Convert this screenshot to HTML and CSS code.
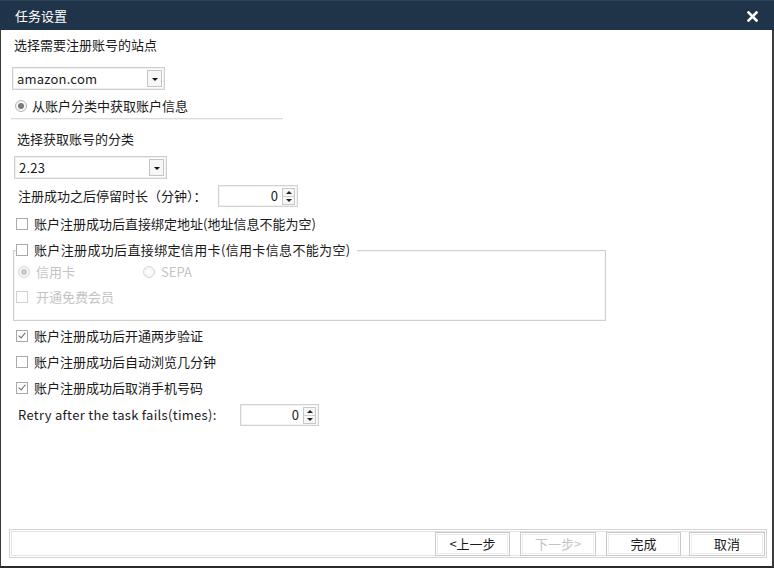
FILE: index.html
```html
<!DOCTYPE html>
<html lang="zh">
<head>
<meta charset="utf-8">
<title>任务设置</title>
<link rel="stylesheet" href="styles.css">
</head>
<body>
<div class="dialog">
  <div class="titlebar">
    <span class="title">任务设置</span>
    <svg class="close" width="11" height="11" viewBox="0 0 11 11"><path d="M1.5 1.5L9.5 9.5M9.5 1.5L1.5 9.5" stroke="#fff" stroke-width="2.6" stroke-linecap="square"/></svg>
  </div>
  <div class="content">
    <div class="label l1">选择需要注册账号的站点</div>
    <div class="select s1"><span class="val">amazon.com</span><span class="drop"><i></i></span></div>
    <div class="row r-radio"><span class="radio on"></span><span>从账户分类中获取账户信息</span></div>
    <div class="sep"></div>
    <div class="label l2">选择获取账号的分类</div>
    <div class="select s2"><span class="val">2.23</span><span class="drop"><i></i></span></div>
    <div class="row r-stay"><span class="lab">注册成功之后停留时长（分钟）：</span>
      <div class="spin sp1"><span class="num">0</span><span class="arrows"><span class="up"></span><span class="dn"></span></span></div>
    </div>
    <div class="row r-addr"><span class="cb"></span><span>账户注册成功后直接绑定地址(地址信息不能为空)</span></div>
    <fieldset class="group">
      <legend><span class="cb"></span><span class="lg">账户注册成功后直接绑定信用卡(信用卡信息不能为空)</span></legend>
      <div class="row dis r-card"><span class="radio on dis-r"></span><span class="t1">信用卡</span><span class="radio dis-r sepa"></span><span>SEPA</span></div>
      <div class="row dis r-free"><span class="cb dis-c"></span><span>开通免费会员</span></div>
    </fieldset>
    <div class="row r-two"><span class="cb on"></span><span>账户注册成功后开通两步验证</span></div>
    <div class="row r-browse"><span class="cb"></span><span>账户注册成功后自动浏览几分钟</span></div>
    <div class="row r-cancel"><span class="cb on"></span><span>账户注册成功后取消手机号码</span></div>
    <div class="row r-retry"><span class="lab">Retry after the task fails(times):</span>
      <div class="spin sp2"><span class="num">0</span><span class="arrows"><span class="up"></span><span class="dn"></span></span></div>
    </div>
  </div>
  <div class="footer">
    <button class="btn">&lt;上一步</button>
    <button class="btn disabled">下一步&gt;</button>
    <button class="btn">完成</button>
    <button class="btn last">取消</button>
  </div>
</div>
</body>
</html>
```

FILE: styles.css
```css
* { box-sizing: border-box; }
html, body { margin: 0; padding: 0; background: #fff; }
body {
  font-family: "Noto Sans CJK SC", "Noto Sans", sans-serif;
  font-size: 13px;
  color: #1a1a1a;
}
.dialog {
  width: 774px;
  height: 568px;
  display: flex;
  flex-direction: column;
  border-left: 1px solid #3a3a3a;
  border-right: 2px solid #3a3a3a;
  border-bottom: 2px solid #2a2a2a;
  background: #fff;
}
.titlebar {
  height: 30px;
  flex: none;
  background: #1f3448;
  border-top: 1px solid #2c4257;
  display: flex;
  align-items: center;
  padding: 0 14px 0 15px;
  margin: 0 -2px 0 -1px;
}
.title { color: #fff; font-size: 13px; flex: 1; }
.close { margin-right: 2px; margin-top: 2px; }

.content {
  flex: 1;
  display: flex;
  flex-direction: column;
  align-items: flex-start;
  padding-left: 11px;
}
.label { height: 16px; line-height: 16px; }
.l1 { margin-top: 7px; margin-left: 2px; }
.l2 { margin-top: 11px; margin-left: 5px; }

.select {
  width: 153px;
  height: 23px;
  border: 1px solid #cfcfcf;
  box-shadow: inset 0 0 0 1px #f0f0f0;
  display: flex;
  align-items: center;
  padding-left: 4px;
}
.select .val { flex: 1; line-height: 16px; letter-spacing: 0.2px; }
.s1 { margin-top: 14px; margin-left: 0; }
.s2 { margin-top: 9px; margin-left: 2px; }
.drop {
  width: 15px;
  height: 17px;
  border: 1px solid #c4c4c4;
  background: #f7f7f7;
  margin-right: 2px;
  display: flex;
  align-items: center;
  justify-content: center;
}
.drop i {
  display: block;
  width: 0; height: 0;
  border-left: 3px solid transparent;
  border-right: 3px solid transparent;
  border-top: 3px solid #111;
  margin-top: 2px;
}

.row { display: flex; align-items: center; height: 16px; line-height: 16px; }
.r-radio { margin-top: 8px; margin-left: 3px; height: 16px; }
.r-radio .radio { margin-right: 5px; }
.sep {
  width: 272px;
  height: 2px;
  margin-left: -1px;
  margin-top: 4px;
  border-top: 1px solid #dcdcdc;
  border-bottom: 1px solid #f3f3f3;
}

.radio {
  width: 12px; height: 12px;
  border-radius: 50%;
  border: 1px solid #b5b5b5;
  background: radial-gradient(circle, #fff 0, #f1f1f1 100%);
  position: relative;
  flex: none;
}
.radio.on::after {
  content: "";
  position: absolute;
  left: 2px; top: 2px;
  width: 6px; height: 6px;
  border-radius: 50%;
  background: #7a7a7a;
}
.cb {
  width: 12px; height: 12px;
  border: 1px solid #a9a9a9;
  background: #fff;
  flex: none;
  margin-right: 6px;
  position: relative;
}
.cb.on::after {
  content: "";
  position: absolute;
  left: 3px; top: 0px;
  width: 3px; height: 6px;
  border-right: 1.5px solid #666;
  border-bottom: 1.5px solid #666;
  transform: rotate(40deg);
}

.r-stay { margin-top: 6px; height: 22px; margin-left: 6px; }
.r-stay .lab { width: 200px; }
.spin {
  height: 22px;
  border: 1px solid #d2d2d2;
  box-shadow: inset 0 0 0 1px #f2f2f2;
  display: flex;
  align-items: center;
  justify-content: flex-end;
  padding-right: 2px;
}
.sp1 { width: 80px; }
.sp2 { width: 79px; }
.num { margin-right: 4px; }
.arrows {
  width: 13px; height: 17px;
  display: flex; flex-direction: column;
  border: 1px solid #c8c8c8;
  background: #f7f7f7;
}
.arrows span { flex: 1; display: flex; align-items: center; justify-content: center; }
.arrows .up { border-bottom: 1px solid #d0d0d0; }
.arrows .up::after {
  content: ""; width: 0; height: 0;
  border-left: 3px solid transparent; border-right: 3px solid transparent;
  border-bottom: 3px solid #222;
}
.arrows .dn::after {
  content: ""; width: 0; height: 0;
  border-left: 3px solid transparent; border-right: 3px solid transparent;
  border-top: 3px solid #222;
}

.r-addr { margin-top: 9px; margin-left: 4px; }

.group {
  margin: 10px 0 0 1px;
  padding: 0 0 0 4px;
  width: 593px;
  height: 79px;
  border: 1px solid #d0d0d0;
  box-shadow: inset 0 0 0 1px #f6f6f6;
  display: flex;
  flex-direction: column;
  min-inline-size: 0;
}
.group legend {
  padding: 0 6px 0 0;
  margin-left: -2px;
  display: flex;
  align-items: center;
  height: 16px;
  line-height: 16px;
  background: #fff;
}
.lg { letter-spacing: 0.35px; }
.dis { color: #c4c4c4; }
.dis-r { border-color: #d6d6d6; }
.dis-r.on::after { background: #c8c8c8; }
.dis-c { border-color: #d0d0d0; }
.r-card { margin-top: 6px; }
.r-card .radio { margin-right: 6px; }
.r-card .t1 { width: 107px; }
.r-free { margin-top: 9px; margin-left: -2px; }
.r-free .cb { margin-right: 8px; }

.r-two { margin-top: 7px; margin-left: 4px; }
.r-browse { margin-top: 10px; margin-left: 4px; }
.r-cancel { margin-top: 10px; margin-left: 4px; }
.r-retry { margin-top: 8px; height: 22px; margin-left: 6px; }
.r-retry .lab { width: 222px; letter-spacing: 0.3px; }

.footer {
  flex: none;
  margin: 0 5px 8px 8px;
  height: 29px;
  border: 1px solid #d4d4d4;
  box-shadow: inset 0 0 0 1px #fff, inset 0 0 0 2px #e4e4e4;
  display: flex;
  align-items: center;
  justify-content: flex-end;
  padding-right: 1px;
  gap: 10px;
}
.btn {
  width: 75px;
  height: 24px;
  font-family: inherit;
  font-size: 13px;
  color: #1a1a1a;
  background: #fff;
  border: 1px solid #c9c9c9;
  box-shadow: inset 0 0 0 1px #fff, inset 0 0 0 2px #ececec;
  padding: 0;
}
.btn.disabled { color: #c4c4c4; width: 76px; }
.btn.last { margin-left: -2px; width: 76px; }
```
